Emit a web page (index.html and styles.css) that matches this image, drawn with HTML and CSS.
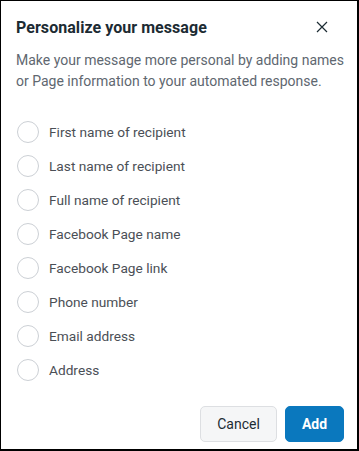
FILE: index.html
```html
<!DOCTYPE html>
<html>
<head>
<meta charset="utf-8">
<link rel="stylesheet" href="styles.css">
</head>
<body>
<div class="dialog">
  <div class="header">
    <h1 class="title">Personalize your message</h1>
    <button class="close" aria-label="Close">
      <svg width="12" height="12" viewBox="0 0 12 12"><path d="M1 1L11 11M11 1L1 11" stroke="#1c2b33" stroke-width="1.2" fill="none"/></svg>
    </button>
  </div>
  <p class="desc">Make your message more personal by adding names or Page information to your automated response.</p>
  <ul class="options">
    <li class="option"><span class="radio"></span><span class="label">First name of recipient</span></li>
    <li class="option"><span class="radio"></span><span class="label">Last name of recipient</span></li>
    <li class="option"><span class="radio"></span><span class="label">Full name of recipient</span></li>
    <li class="option"><span class="radio"></span><span class="label">Facebook Page name</span></li>
    <li class="option"><span class="radio"></span><span class="label">Facebook Page link</span></li>
    <li class="option"><span class="radio"></span><span class="label">Phone number</span></li>
    <li class="option"><span class="radio"></span><span class="label">Email address</span></li>
    <li class="option"><span class="radio"></span><span class="label">Address</span></li>
  </ul>
  <div class="footer">
    <button class="btn btn-secondary">Cancel</button>
    <button class="btn btn-primary">Add</button>
  </div>
</div>
</body>
</html>
```
FILE: styles.css
```css
html, body {
  margin: 0;
  padding: 0;
  background: #fff;
}
body {
  width: 359px;
  height: 451px;
  box-sizing: border-box;
  border-top: 1px solid #000;
  border-left: 1px solid #000;
  border-right: 2px solid #000;
  border-bottom: 2px solid #000;
  font-family: Roboto, "Liberation Sans", sans-serif;
  overflow: hidden;
}
.dialog {
  padding: 16px 13px 0 15px;
  display: flex;
  flex-direction: column;
}
.header {
  display: flex;
  align-items: center;
  justify-content: space-between;
  height: 20px;
}
.title {
  margin: 0;
  font-size: 16px;
  font-weight: 700;
  color: #1c2b33;
  letter-spacing: 0.05px;
}
.close {
  border: 0;
  background: none;
  padding: 0;
  margin-right: 16px;
  width: 12px;
  height: 12px;
  display: flex;
}
.desc {
  margin: 13px 0 0 0;
  font-size: 14px;
  line-height: 21px;
  color: #606770;
}
.options {
  list-style: none;
  margin: 29px 0 0 0;
  padding: 0;
  display: flex;
  flex-direction: column;
  gap: 12px;
}
.option {
  display: flex;
  align-items: center;
  gap: 10px;
  height: 22px;
}
.radio {
  width: 20px;
  height: 20px;
  border: 1px solid #ccd0d5;
  border-radius: 50%;
  margin-left: 1px;
  flex: none;
}
.label {
  font-size: 13.7px;
  color: #4b4f56;
}
.footer {
  display: flex;
  justify-content: flex-end;
  gap: 8px;
  margin-top: 25px;
}
.btn {
  height: 36px;
  border-radius: 5px;
  font-family: Roboto, "Liberation Sans", sans-serif;
  font-size: 14px;
  padding: 0;
}
.btn-secondary {
  background: #f5f6f7;
  border: 1px solid #dddfe2;
  color: #1c2b33;
  width: 77px;
}
.btn-primary {
  background: #0a78be;
  border: 1px solid #0a78be;
  color: #fff;
  font-weight: 700;
  width: 59px;
}
```
